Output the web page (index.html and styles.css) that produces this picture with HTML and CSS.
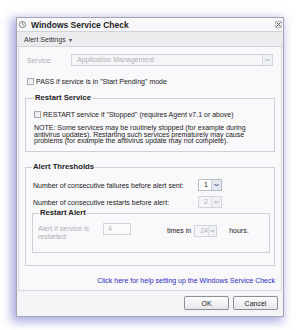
FILE: index.html
```html
<!DOCTYPE html>
<html>
<head>
<meta charset="utf-8">
<link rel="stylesheet" href="styles.css">
</head>
<body>
<div class="dialog">
  <div class="titlebar">
    <svg class="ticon" width="7" height="7" viewBox="0 0 14 14"><circle cx="7" cy="7" r="6" fill="#fff" stroke="#555" stroke-width="1.6"/><path d="M7 3v4l3 2" fill="none" stroke="#555" stroke-width="1.6"/></svg>
    <span class="title">Windows Service Check</span>
    <span class="close"><svg width="5" height="5" viewBox="0 0 10 10"><path d="M1 1L9 9M9 1L1 9" stroke="#555" stroke-width="2"/></svg></span>
  </div>
  <div class="toolbar"><span class="menu">Alert Settings</span><span class="caret">▾</span></div>
  <div class="content">
    <div class="row service">
      <span class="lbl disabled">Service:</span>
      <div class="select wide dis"><span class="val">Application Management</span><span class="arrow"><svg width="5" height="4" viewBox="0 0 10 8"><path d="M1 2l4 4 4-4" fill="none" stroke="#9aa4bc" stroke-width="2"/></svg></span></div>
    </div>
    <div class="row check">
      <span class="box"></span><span>PASS if service is in "Start Pending" mode</span>
    </div>
    <fieldset class="fs restart">
      <legend>Restart Service</legend>
      <div class="row check"><span class="box"></span><span>RESTART service if "Stopped" (requires Agent v7.1 or above)</span></div>
      <p class="note">NOTE: Some services may be routinely stopped (for example during antivirus updates). Restarting such services prematurely may cause problems (for example the antivirus update may not complete).</p>
    </fieldset>
    <fieldset class="fs thresholds">
      <legend>Alert Thresholds</legend>
      <div class="row trow">
        <span class="tlbl">Number of consecutive failures before alert sent:</span>
        <div class="select small"><span class="val">1</span><span class="arrow"><svg width="5" height="4" viewBox="0 0 10 8"><path d="M1 2l4 4 4-4" fill="none" stroke="#34487a" stroke-width="2"/></svg></span></div>
      </div>
      <div class="row trow second">
        <span class="tlbl">Number of consecutive restarts before alert:</span>
        <div class="select small dis"><span class="val">2</span><span class="arrow"><svg width="5" height="4" viewBox="0 0 10 8"><path d="M1 2l4 4 4-4" fill="none" stroke="#9aa4bc" stroke-width="2"/></svg></span></div>
      </div>
      <fieldset class="fs ralert">
        <legend>Restart Alert</legend>
        <div class="row arow">
          <span class="albl disabled">Alert if service is restarted:</span>
          <span class="input">4</span>
          <span class="times">times in</span>
          <div class="select tiny dis"><span class="val">24</span><span class="arrow"><svg width="5" height="4" viewBox="0 0 10 8"><path d="M1 2l4 4 4-4" fill="none" stroke="#9aa4bc" stroke-width="2"/></svg></span></div>
          <span class="hours">hours.</span>
        </div>
      </fieldset>
    </fieldset>
    <div class="help"><a href="#">Click here for help setting up the Windows Service Check</a></div>
  </div>
  <div class="footer">
    <button class="btn">OK</button>
    <button class="btn">Cancel</button>
  </div>
</div>
</body>
</html>
```
FILE: styles.css
```css
html, body {
  margin: 0;
  padding: 0;
  background: #ffffff;
}
body {
  font-family: "Liberation Sans", Arial, sans-serif;
  font-size: 7px;
  color: #222;
  width: 302px;
  height: 330px;
  overflow: hidden;
}
.dialog {
  margin: 17px 0 0 16px;
  width: 268px;
  height: 300px;
  box-sizing: border-box;
  border: 1px solid #a4a4b4;
  background: #f5f4f7;
  box-shadow: -3px 3px 9px 2px rgba(110, 110, 200, 0.55);
  display: flex;
  flex-direction: column;
}
.titlebar {
  height: 13px;
  flex: none;
  display: flex;
  align-items: center;
  padding-left: 2px;
  padding-right: 1px;
  border-bottom: 1px solid #d2d2da;
  background: #f8f7fa;
}
.ticon { display: block; }
.title {
  font-weight: bold;
  font-size: 8.5px;
  margin-left: 5px;
  color: #1e1e1e;
  flex: 1;
}
.close {
  width: 7px;
  height: 7px;
  border: 1px solid #c4c4cc;
  background: #f1f1f4;
  display: flex;
  align-items: center;
  justify-content: center;
  box-sizing: border-box;
}
.close svg { display: block; }
.toolbar {
  height: 14px;
  flex: none;
  display: flex;
  align-items: center;
  padding-left: 7px;
  background: #ececef;
  border-bottom: 1px solid #d4d4da;
  color: #333;
}
.caret {
  margin-left: 3px;
  font-size: 6px;
  color: #445;
}
.content {
  flex: 1;
  min-height: 0;
  margin: 0 1px;
  border: 1px solid #d8d8de;
  border-top: none;
  background: #f9f8fb;
  padding: 7px 8px 0 8px;
  display: flex;
  flex-direction: column;
}
.content > * { flex-shrink: 0; }
.row {
  display: flex;
  align-items: center;
}
.service { height: 12px; }
.lbl { width: 44px; }
.disabled { color: #aeaeb4; }
.select {
  display: flex;
  height: 12px;
  box-sizing: border-box;
  border: 1px solid #b8bcc6;
  background: #ffffff;
}
.select.dis {
  border-color: #d2d4da;
  background: #f6f6f8;
  color: #b0b0b6;
}
.select .val {
  flex: 1;
  padding-left: 5px;
  line-height: 10px;
  font-size: 7px;
}
.select .arrow {
  width: 9px;
  border-left: 1px solid #c8ccd6;
  background: #e2e6ee;
  display: flex;
  align-items: center;
  justify-content: center;
}
.select.dis .arrow {
  background: #eef0f4;
  border-left-color: #dadce2;
}
.wide { flex: 1; }
.wide .val { padding-left: 5px; }
.check {
  height: 8px;
  margin-top: 11px;
}
.box {
  width: 7px;
  height: 7px;
  box-sizing: border-box;
  border: 1px solid #a8a8b0;
  background: linear-gradient(135deg, #e4e4ea, #fbfbfd);
  margin-right: 2px;
  flex: none;
}
.fs {
  border: 1px solid #cfcfd6;
  margin: 0 -2px;
  padding: 0;
  min-width: 0;
}
.fs legend {
  font-weight: bold;
  font-size: 7.7px;
  line-height: 8px;
  height: 8px;
  padding: 0 1px;
  margin-left: 0;
  color: #222;
}
.restart {
  margin-top: 9px;
  padding: 8px 8px 6px 8px;
}
.restart .check { margin-top: 0; }
.note {
  margin: 7px 0 0 0;
  line-height: 6.7px;
  height: 20px;
  font-size: 7px;
}
.thresholds {
  margin-top: 11px;
  padding: 8px 4px 12px 7px;
}
.thresholds > legend { margin-left: -1px; }
.trow { height: 12px; }
.trow.second { margin-top: 5px; }
.tlbl { width: 165px; }
.small { width: 24px; }
.ralert {
  margin: 1px 0 0 -1px;
  padding: 6px 4px 11px 5px;
}
.ralert > legend { margin-left: 1px; }
.arow { align-items: flex-start; }
.albl {
  width: 55px;
  margin-right: 10px;
  line-height: 8px;
  margin-top: 2px;
}
.input {
  width: 28px;
  height: 12px;
  box-sizing: border-box;
  border: 1px solid #d2d4da;
  background: #fbfbfc;
  color: #b0b0b6;
  padding-left: 4px;
  line-height: 10px;
}
.times {
  margin-left: 36px;
  line-height: 12px;
  margin-top: 2px;
}
.tiny {
  width: 23px;
  margin-left: 3px;
  margin-top: 2px;
}
.hours {
  margin-left: 12px;
  line-height: 12px;
  margin-top: 2px;
}
.help {
  margin: 11px -2px 0 0;
  text-align: right;
  line-height: 8px;
}
.help a {
  color: #2a2ac4;
  text-decoration: none;
}
.footer {
  height: 25px;
  flex: none;
  display: flex;
  justify-content: flex-end;
  align-items: flex-start;
  padding: 5px 5px 0 0;
  box-sizing: border-box;
  gap: 4px;
}
.btn {
  height: 14px;
  width: 45px;
  font-family: "Liberation Sans", Arial, sans-serif;
  font-size: 7px;
  color: #222;
  border: 1px solid #8e8e96;
  border-radius: 2px;
  background: linear-gradient(#fdfdfd, #e8e8ec);
  padding: 0;
}
```
